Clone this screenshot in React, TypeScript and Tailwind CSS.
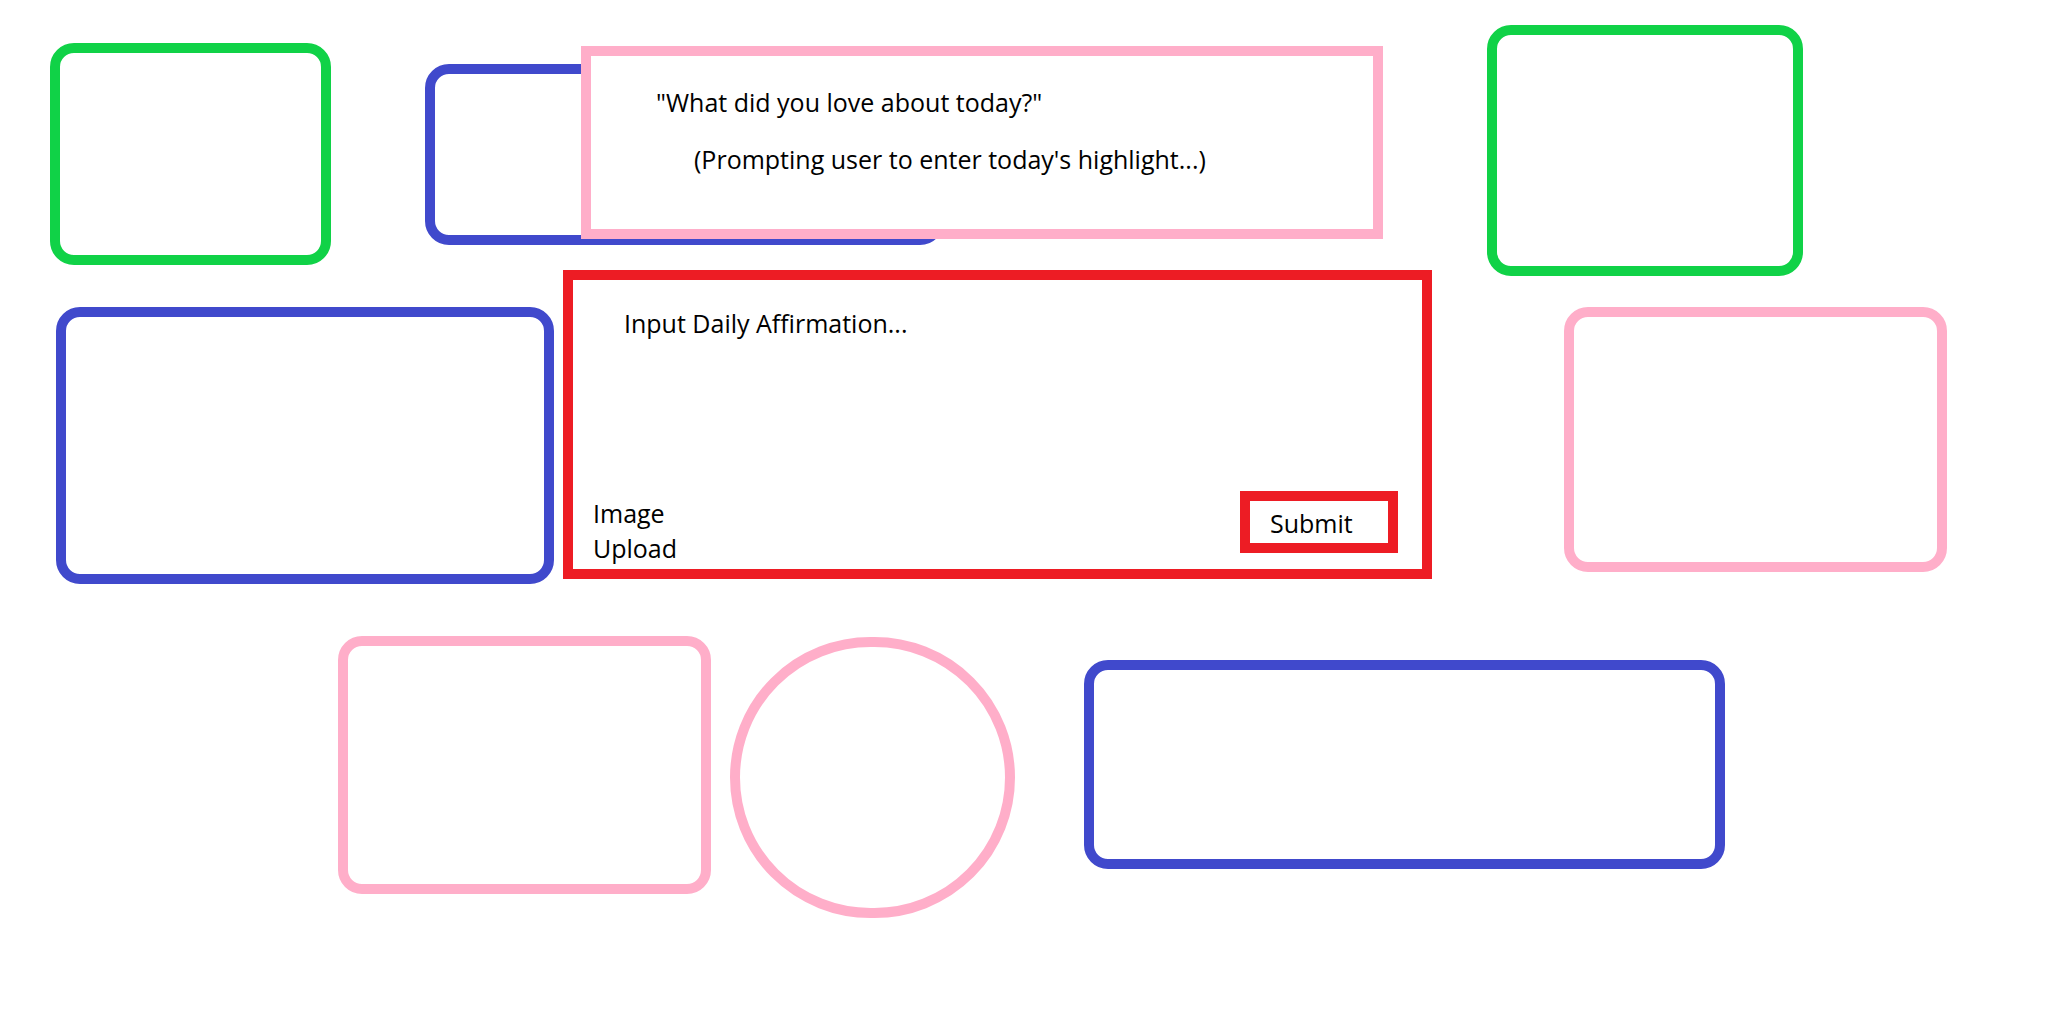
import React from "react";

const font = { fontFamily: '"Open Sans", "Noto Sans", sans-serif' };

function Frame({ className }: { className: string }) {
  return <div className={`shrink-0 rounded-[24px] border-[10px] ${className}`} />;
}

export default function App() {
  return (
    <div
      className="flex flex-col w-[2056px] h-[1032px] overflow-hidden bg-white text-black pt-[25px]"
      style={font}
    >
      {/* top row */}
      <div className="flex items-start h-[251px] pl-[50px]">
        <div className="shrink-0 mt-[18px] w-[281px] h-[222px] rounded-[24px] border-[10px] border-[#10d247]" />
        <div className="flex items-start ml-[94px] mt-[21px] shrink-0">
          <div className="shrink-0 mt-[18px] w-[519px] h-[181px] rounded-[24px] border-[10px] border-[#4049cc]" />
          <section className="relative shrink-0 ml-[-363px] w-[802px] h-[193px] border-[10px] border-[#ffaec9] bg-white">
            <div className="flex flex-col pt-[34px] text-[25px] leading-[25px]">
              <p className="pl-[65px]">"What did you love about today?"</p>
              <p className="pl-[103px] mt-[32px]">(Prompting user to enter today's highlight...)</p>
            </div>
          </section>
        </div>
        <div className="shrink-0 ml-[104px] w-[316px] h-[251px] rounded-[24px] border-[10px] border-[#10d247]" />
      </div>

      {/* middle row */}
      <div className="flex items-start h-[314px] mt-[-6px] pl-[56px]">
        <div className="shrink-0 mt-[37px] w-[498px] h-[277px] rounded-[24px] border-[10px] border-[#4049cc]" />
        <section className="shrink-0 ml-[9px] w-[869px] h-[309px] border-[10px] border-[#ed1c24] bg-white flex flex-col justify-between">
          <p className="pl-[51px] pt-[31px] text-[25px] leading-[25px]">Input Daily Affirmation...</p>
          <div className="flex items-end justify-between">
            <p className="pl-[20px] pb-[3px] w-[120px] text-[25px] leading-[35px]">
              <span className="block">Image</span>
              <span className="block">Upload</span>
            </p>
            <button className="mr-[24px] mb-[16px] w-[158px] h-[62px] border-[10px] border-[#ed1c24] bg-white pl-[20px] pt-[2px] text-left text-[25px] leading-[40px]">
              Submit
            </button>
          </div>
        </section>
        <div className="shrink-0 ml-[132px] mt-[37px] w-[383px] h-[265px] rounded-[24px] border-[10px] border-[#ffaec9]" />
      </div>

      {/* bottom row */}
      <div className="flex items-start mt-[52px] pl-[338px]">
        <div className="shrink-0 w-[373px] h-[258px] rounded-[24px] border-[10px] border-[#ffaec9]" />
        <div className="shrink-0 ml-[19px] mt-[1px] w-[285px] h-[281px] rounded-full border-[10px] border-[#ffaec9]" />
        <div className="shrink-0 ml-[69px] mt-[24px] w-[641px] h-[209px] rounded-[24px] border-[10px] border-[#4049cc]" />
      </div>
    </div>
  );
}
